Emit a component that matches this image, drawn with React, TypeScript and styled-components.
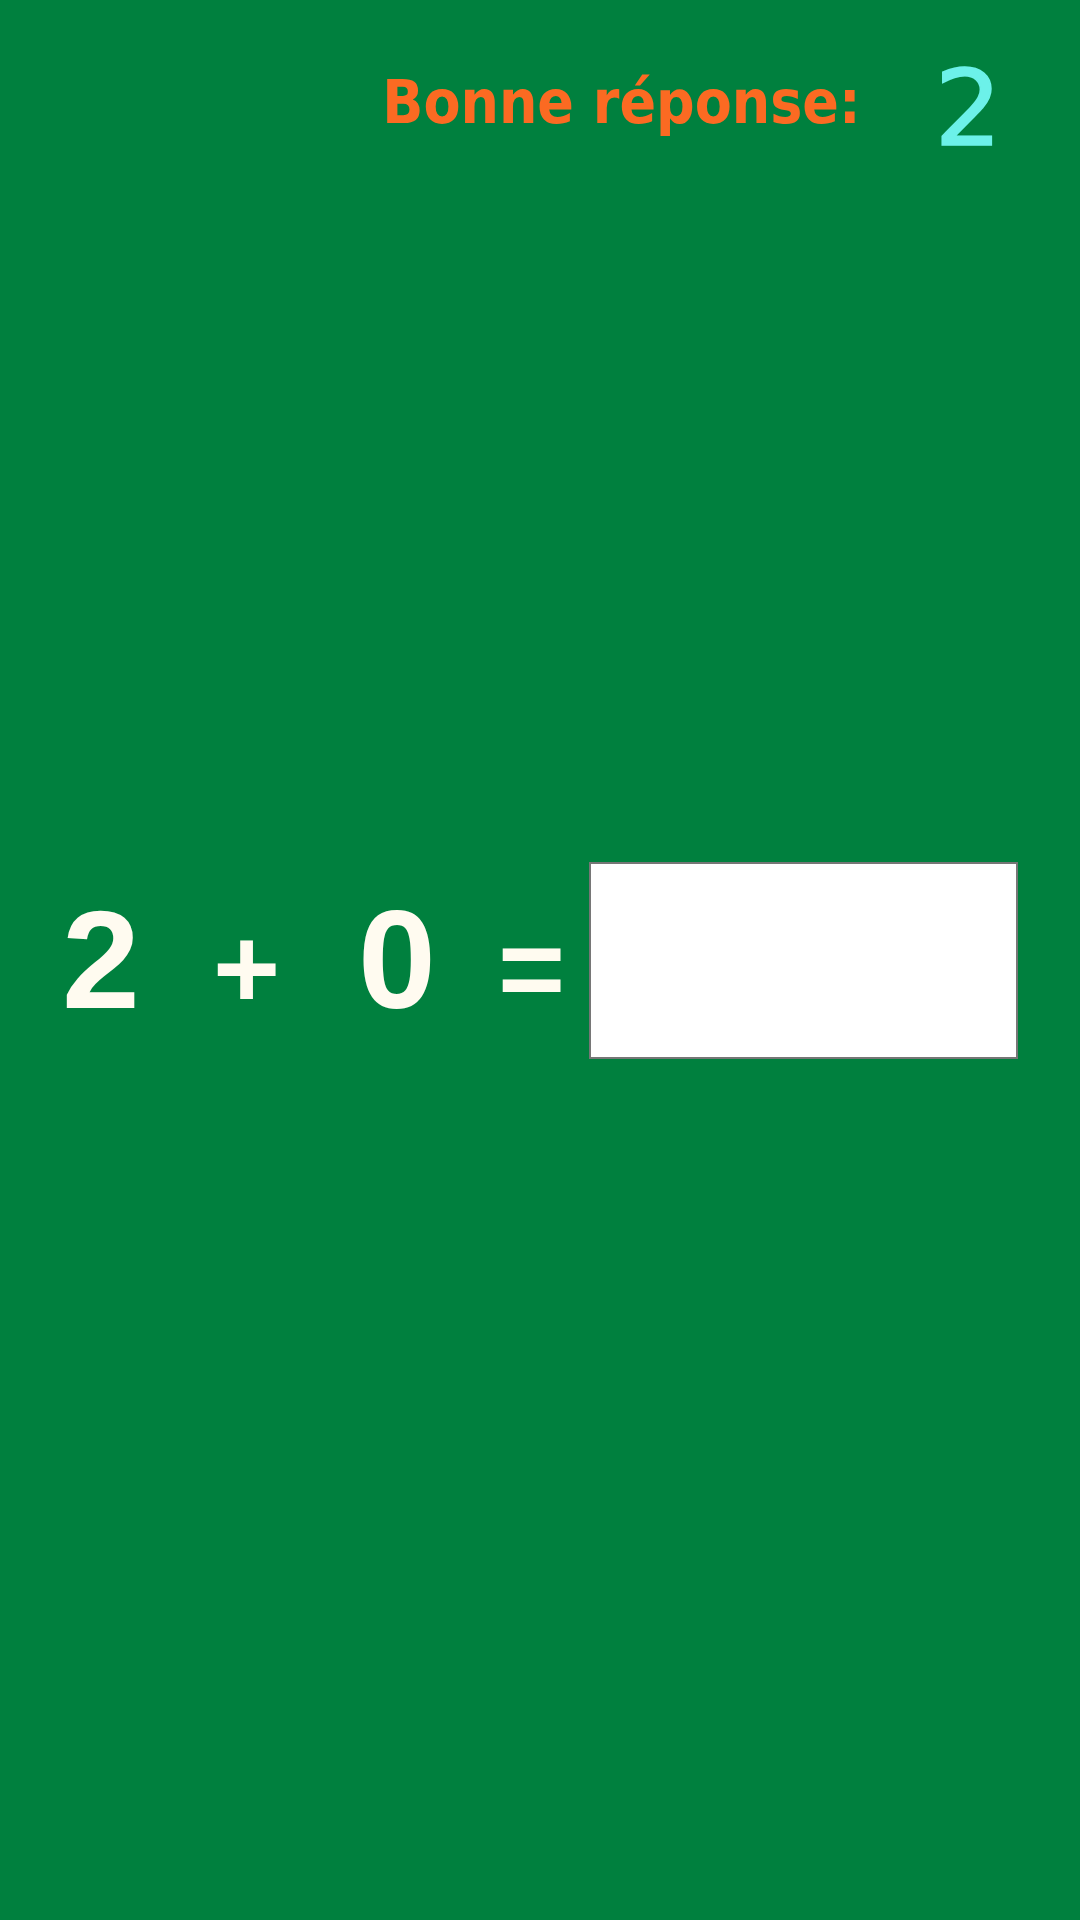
import styled, { createGlobalStyle } from 'styled-components';

const GlobalStyle = createGlobalStyle`
  html, body {
    margin: 0;
    padding: 0;
    background-color: #00803e;
  }
  * {
    box-sizing: border-box;
  }
`;

const Page = styled.div`
  width: 1080px;
  height: 1920px;
  background-color: #00803e;
  display: grid;
  grid-template-rows: 1fr auto 1fr;
`;

const Header = styled.header`
  display: flex;
  justify-content: flex-end;
  align-items: flex-start;
  align-self: start;
  padding: 56px 78px 0 0;
  gap: 74px;
`;

const Label = styled.span`
  font-family: 'DejaVu Sans Condensed', 'DejaVu Sans', sans-serif;
  font-stretch: condensed;
  font-weight: bold;
  font-size: 60px;
  line-height: 1;
  color: #fb6a22;
  margin-top: 16px;
`;

const Answer = styled.span`
  font-family: 'DejaVu Sans', Verdana, sans-serif;
  font-size: 106px;
  line-height: 1;
  color: #6cf1e9;
  -webkit-text-stroke: 1.5px #6cf1e9;
`;

const Equation = styled.main`
  display: flex;
  align-items: center;
  padding-left: 62px;
`;

const Terms = styled.div`
  display: flex;
  align-items: baseline;
`;

const Token = styled.span<{ $size: number; $after: number }>`
  font-family: 'Liberation Sans', Arial, sans-serif;
  font-weight: bold;
  font-size: ${(props) => props.$size}px;
  line-height: 1;
  color: #fffbf0;
  margin-right: ${(props) => props.$after}px;
`;

const AnswerInput = styled.input`
  width: 429px;
  height: 197px;
  border: 2px solid #767676;
  background: #ffffff;
  font-family: 'Liberation Sans', Arial, sans-serif;
  font-size: 100px;
  padding: 0 12px;
  outline: none;
`;

export default function App() {
  return (
    <>
      <GlobalStyle />
      <Page>
        <Header>
          <Label>Bonne réponse:</Label>
          <Answer>2</Answer>
        </Header>
        <Equation>
          <Terms>
            <Token $size={140} $after={73}>2</Token>
            <Token $size={115} $after={78}>+</Token>
            <Token $size={140} $after={62}>0</Token>
            <Token $size={115} $after={24}>=</Token>
          </Terms>
          <AnswerInput type="text" aria-label="Réponse" />
        </Equation>
        <div />
      </Page>
    </>
  );
}
